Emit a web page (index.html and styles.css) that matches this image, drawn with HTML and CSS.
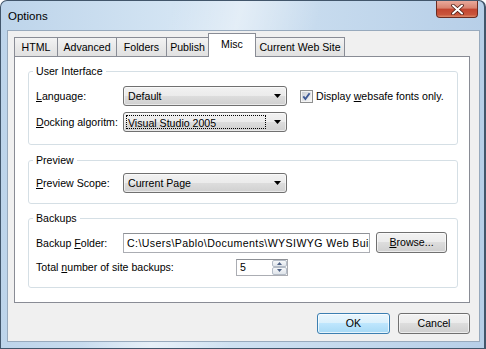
FILE: index.html
```html
<!DOCTYPE html>
<html lang="en">
<head>
    <meta charset="UTF-8">
    <meta name="viewport" content="width=device-width, initial-scale=1.0">
    <title>Options</title>

    <link rel="stylesheet" href="styles.css">
</head>
<body>

    <div class="window">

        <!-- 标题栏 -->
        <div class="titlebar">
            <span class="title">Options</span>
            <div class="close">
                <svg width="15" height="11" viewBox="0 0 15 11">
                    <path d="M3 1.5 L12 9.5 M12 1.5 L3 9.5" stroke="#4a1a12" stroke-width="3.6" stroke-linecap="round" fill="none"/>
                    <path d="M3 1.5 L12 9.5 M12 1.5 L3 9.5" stroke="#ffffff" stroke-width="2" stroke-linecap="round" fill="none"/>
                </svg>
            </div>
        </div>

        <div class="client">

            <!-- 选项卡 -->
            <div class="tabs">
                <div class="tab t1">HTML</div>
                <div class="tab t2">Advanced</div>
                <div class="tab t3">Folders</div>
                <div class="tab t4">Publish</div>
                <div class="tab t5 active">Misc</div>
                <div class="tab t6">Current Web Site</div>
            </div>

            <div class="panel">

                <fieldset class="group g1">
                    <legend>User Interface</legend>
                    <div class="row">
                        <span class="lbl"><u>L</u>anguage:</span>
                        <div class="combo">
                            <span class="val">Default</span>
                            <svg class="arrow" width="7" height="4" viewBox="0 0 7 4"><polygon points="0,0 7,0 3.5,4" fill="#000"/></svg>
                        </div>
                        <div class="check">
                            <svg width="13" height="13" viewBox="0 0 13 13">
                                <defs>
                                    <linearGradient id="cb" x1="0" y1="0" x2="1" y2="1">
                                        <stop offset="0" stop-color="#cbcfd5"/>
                                        <stop offset="1" stop-color="#f6f6f6"/>
                                    </linearGradient>
                                </defs>
                                <rect x="0.5" y="0.5" width="12" height="12" fill="#f4f4f4" stroke="#8e8f8f"/>
                                <rect x="2" y="2" width="9" height="9" fill="url(#cb)"/>
                                <path d="M3.3 6.4 L5.4 9 L9.6 3.2" fill="none" stroke="#3f5a96" stroke-width="1.9"/>
                            </svg>
                            <span>Display <u>w</u>ebsafe fonts only.</span>
                        </div>
                    </div>
                    <div class="row">
                        <span class="lbl"><u>D</u>ocking algoritm:</span>
                        <div class="combo focus">
                            <span class="val">Visual Studio 2005</span>
                            <svg class="arrow" width="7" height="4" viewBox="0 0 7 4"><polygon points="0,0 7,0 3.5,4" fill="#000"/></svg>
                        </div>
                    </div>
                </fieldset>

                <fieldset class="group g2">
                    <legend>Preview</legend>
                    <div class="row">
                        <span class="lbl"><u>P</u>review Scope:</span>
                        <div class="combo">
                            <span class="val">Current Page</span>
                            <svg class="arrow" width="7" height="4" viewBox="0 0 7 4"><polygon points="0,0 7,0 3.5,4" fill="#000"/></svg>
                        </div>
                    </div>
                </fieldset>

                <fieldset class="group g3">
                    <legend>Backups</legend>
                    <div class="row r1">
                        <span class="lbl">Backup <u>F</u>older:</span>
                        <div class="edit">C:\Users\Pablo\Documents\WYSIWYG Web Builder</div>
                        <div class="btn browse"><u>B</u>rowse...</div>
                    </div>
                    <div class="row r2">
                        <span class="lbl wide">Total <u>n</u>umber of site backups:</span>
                        <div class="spin">
                            <span class="num">5</span>
                            <div class="spinbtns">
                                <div class="sb"><svg width="5" height="3" viewBox="0 0 5 3"><polygon points="0,3 5,3 2.5,0" fill="#4d6185"/></svg></div>
                                <div class="sb"><svg width="5" height="3" viewBox="0 0 5 3"><polygon points="0,0 5,0 2.5,3" fill="#4d6185"/></svg></div>
                            </div>
                        </div>
                    </div>
                </fieldset>

            </div>

            <!-- 底部按钮 -->
            <div class="buttons">
                <div class="btn ok">OK</div>
                <div class="btn cancel">Cancel</div>
            </div>

        </div>
    </div>

</body>
</html>
```

FILE: styles.css
```css
/*初始化*/
body{
    margin: 0;
    font-family: "Liberation Sans", Arial, sans-serif;
    font-size: 10.6px;
    color: #000;
}

/*1.窗口外框*/
.window{
    width: 486px;
    height: 349px;
    box-sizing: border-box;
    border: 1px solid #42566b;
    border-right-width: 2px;
    border-radius: 7px 7px 0 0;
    overflow: hidden;
    background:
        linear-gradient(105deg, rgba(255,255,255,0) 30%, rgba(255,255,255,.45) 42%, rgba(255,255,255,0) 56%),
        linear-gradient(to right, #bdd4ea, #d3e4f3 35%, #c7dbee 65%, #b7cfe8);
}

/*2.标题栏*/
.titlebar{
    height: 29px;
    display: flex;
    justify-content: space-between;
    align-items: flex-start;
    padding-left: 7px;
}

.title{
    align-self: center;
    font-size: 11.5px;
    line-height: 14px;
}

.close{
    width: 42px;
    height: 17px;
    margin-right: 6px;
    box-sizing: border-box;
    border: 1px solid #6b2c22;
    border-top: none;
    border-radius: 0 0 4px 4px;
    background: linear-gradient(#e9a99b, #d8826f 45%, #c24530 50%, #c9553c 85%, #de8a6a);
    display: flex;
    justify-content: center;
    align-items: center;
}

/*3.客户区*/
.client{
    width: 473px;
    height: 312px;
    margin-left: 6px;
    box-sizing: border-box;
    border: 1px solid #98aabd;
    background-color: #f0f0f0;
    padding: 0 9px 0 6px;
}

/*4.选项卡*/
.tabs{
    height: 25px;
    display: flex;
    align-items: flex-end;
}

.tab{
    height: 19px;
    box-sizing: border-box;
    border: 1px solid #898c95;
    border-bottom: none;
    margin-right: -1px;
    background: linear-gradient(#f3f3f3, #e9e9e9 50%, #e1e1e1);
    text-align: center;
    line-height: 18px;
}

.t1{ width: 44px; }
.t2{ width: 60px; }
.t3{ width: 51px; }
.t4{ width: 43px; }
.t5{ width: 48px; }
.t6{ width: 90px; }

.tab.active{
    height: 24px;
    margin-bottom: -1px;
    background: #fff;
    line-height: 20px;
    position: relative;
}

/*5.选项卡内容*/
.panel{
    height: 247px;
    box-sizing: border-box;
    border: 1px solid #898c95;
    background-color: #fff;
    padding: 7px 11px 0 13px;
}

.group{
    margin: 0;
    min-width: 0;
    border: 1px solid #d5dfe5;
    border-radius: 3px;
    padding: 8px 7px 12px 7px;
}

.group legend{
    padding: 0 3px;
    margin-left: -3px;
    line-height: 14px;
}

.g2{
    margin-top: 8px;
    padding-top: 6px;
    padding-bottom: 10px;
}

.g3{
    margin-top: 7px;
    padding-top: 7px;
    padding-bottom: 10px;
}

.row{
    height: 20px;
    display: flex;
    align-items: center;
}

.row + .row{
    margin-top: 6px;
}

.g3 .r1{
    height: 21px;
}

.g3 .r2{
    margin-top: 4px;
}

.lbl{
    width: 87px;
    flex: none;
}

.lbl.wide{
    width: 200px;
}

/*6.下拉框*/
.combo{
    width: 164px;
    height: 20px;
    box-sizing: border-box;
    border: 1px solid #707070;
    border-radius: 3px;
    background: linear-gradient(#f2f2f2, #ebebeb 50%, #dddddd 50%, #d0d0d0);
    box-shadow: inset 0 0 0 1px rgba(255,255,255,.55);
    display: flex;
    align-items: center;
    padding-left: 4px;
}

.combo .val{
    flex: 1;
    white-space: nowrap;
}

.combo .arrow{
    margin: 0 5px 0 8px;
}

.combo.focus{
    padding-left: 2px;
}

.combo.focus .val{
    align-self: stretch;
    margin: 2px 0;
    border: 1px dotted #000;
    padding-left: 1px;
    line-height: 14px;
}

/*7.复选框*/
.check{
    display: flex;
    align-items: center;
    margin-left: 13px;
    gap: 3px;
    white-space: nowrap;
}

/*8.文本框*/
.edit{
    width: 247px;
    height: 20px;
    box-sizing: border-box;
    border: 1px solid #abadb3;
    border-top-color: #8e9196;
    background: #fff;
    padding-left: 3px;
    line-height: 18px;
    letter-spacing: 0.4px;
    white-space: nowrap;
    overflow: hidden;
}

.spin{
    width: 52px;
    height: 17px;
    box-sizing: border-box;
    border: 1px solid #abadb3;
    border-top-color: #8e9196;
    background: #fff;
    display: flex;
}

.spin .num{
    flex: 1;
    padding-left: 3px;
    line-height: 15px;
}

.spinbtns{
    width: 15px;
    display: flex;
    flex-direction: column;
}

.sb{
    flex: 1;
    box-sizing: border-box;
    border: 1px solid #b4bcc7;
    border-radius: 2px;
    background: linear-gradient(#f6f8fa, #dfe4ea);
    display: flex;
    justify-content: center;
    align-items: center;
}

/*9.按钮*/
.btn{
    height: 21px;
    box-sizing: border-box;
    border: 1px solid #707070;
    border-radius: 3px;
    background: linear-gradient(#f2f2f2, #ebebeb 50%, #dddddd 50%, #cfcfcf);
    box-shadow: inset 0 0 0 1px rgba(255,255,255,.6);
    text-align: center;
    line-height: 19px;
}

.browse{
    width: 71px;
    margin-left: 6px;
}

.buttons{
    display: flex;
    justify-content: flex-end;
    gap: 8px;
    margin-top: 10px;
}

.ok{
    width: 73px;
    border-color: #3c7fb1;
    background: linear-gradient(#eaf6fd, #d9f0fc 50%, #bee6fd 50%, #a7d9f5);
    box-shadow: inset 0 0 0 1px rgba(255,255,255,.7);
}

.cancel{
    width: 72px;
}
```
